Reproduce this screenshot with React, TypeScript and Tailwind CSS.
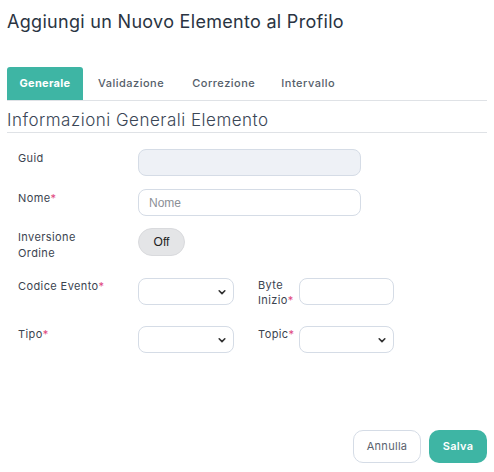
import React from "react";

const Chevron = () => (
  <svg className="absolute right-[6px] top-1/2 -translate-y-1/2" width="10" height="10" viewBox="0 0 16 16" fill="none">
    <path d="M3.5 6l4.5 4.5 4.5-4.5" stroke="#333" strokeWidth="2.6" strokeLinecap="round" strokeLinejoin="round" />
  </svg>
);

const Req = () => <span className="text-[#e0467c]">*</span>;

export default function App() {
  return (
    <div className="w-[494px] h-[472px] bg-white relative font-['Inter',sans-serif] text-[#333f4f]">
      <div className="px-[7px] pt-[11px]">
        <h1 className="text-[18px] leading-[22px] text-[#2a3442] tracking-[0.3px]">Aggiungi un Nuovo Elemento al Profilo</h1>
        <div className="mt-[34px] flex border-b border-[#dfe2e6] h-[34px] w-[480px]">
          <div className="w-[76px] bg-[#3eb5a4] text-white text-[11px] font-bold tracking-[0.3px] flex items-center justify-center rounded-t-[3px]">Generale</div>
          <div className="ml-[15px] text-[11px] font-medium tracking-[0.5px] text-[#555e6a] flex items-center">Validazione</div>
          <div className="ml-[28px] text-[11px] font-medium tracking-[0.5px] text-[#555e6a] flex items-center">Correzione</div>
          <div className="ml-[26px] text-[11px] font-medium tracking-[0.5px] text-[#555e6a] flex items-center">Intervallo</div>
        </div>
        <div className="w-[480px] border-b border-[#dfe2e6] pt-[8px] pb-[1px]">
          <h2 className="text-[17px] leading-[22px] font-light tracking-[0.5px] text-[#3a4656]">Informazioni Generali Elemento</h2>
        </div>
      </div>

      <div className="pl-[18px] pt-[16px] text-[11px] tracking-[0.4px] text-[#3b4450]">
        <div className="flex h-[27px]">
          <div className="w-[120px] shrink-0 pt-[1px]">Guid</div>
          <div className="w-[223px] shrink-0 h-[27px] rounded-[8px] bg-[#eef1f6] border border-[#d5dce6]" />
        </div>
        <div className="flex h-[27px] mt-[13px]">
          <div className="w-[120px] shrink-0 pt-[1px]">Nome<Req /></div>
          <div className="w-[223px] shrink-0 h-[27px] rounded-[8px] bg-white border border-[#d5dce6] flex items-center px-[10px] font-['Liberation_Sans',sans-serif] tracking-normal text-[12px] text-[#8b8f96]">Nome</div>
        </div>
        <div className="flex h-[28px] mt-[12px]">
          <div className="w-[120px] shrink-0 leading-[16px] pt-[1px]">Inversione<br />Ordine</div>
          <div className="w-[47px] shrink-0 h-[28px] rounded-full bg-[#e4e5e7] border border-[#d9dadd] flex items-center justify-center font-['Liberation_Sans',sans-serif] tracking-normal text-[12px] text-[#222]">Off</div>
        </div>
        <div className="flex h-[27px] mt-[22px]">
          <div className="w-[120px] shrink-0">Codice Evento<Req /></div>
          <div className="relative w-[96px] shrink-0 h-[27px] rounded-[8px] bg-white border border-[#d5dce6]"><Chevron /></div>
          <div className="ml-[24px] w-[41px] shrink-0 leading-[15px] whitespace-nowrap">Byte<br />Inizio<Req /></div>
          <div className="w-[95px] shrink-0 h-[27px] rounded-[8px] bg-white border border-[#d5dce6]" />
        </div>
        <div className="flex h-[27px] mt-[21px]">
          <div className="w-[120px] shrink-0">Tipo<Req /></div>
          <div className="relative w-[96px] shrink-0 h-[27px] rounded-[8px] bg-white border border-[#d5dce6]"><Chevron /></div>
          <div className="ml-[24px] w-[41px] shrink-0 whitespace-nowrap">Topic<Req /></div>
          <div className="relative w-[95px] shrink-0 h-[27px] rounded-[8px] bg-white border border-[#d5dce6]"><Chevron /></div>
        </div>
      </div>

      <div className="absolute right-[7px] bottom-[9px] flex gap-[8px]">
        <div className="w-[68px] h-[33px] rounded-[10px] border border-[#d5dce6] bg-white flex items-center justify-center text-[11px] tracking-[0.3px] text-[#5a626d]">Annulla</div>
        <div className="w-[58px] h-[33px] rounded-[10px] bg-[#3eb5a4] flex items-center justify-center text-[11px] font-semibold tracking-[0.3px] text-white">Salva</div>
      </div>
    </div>
  );
}
